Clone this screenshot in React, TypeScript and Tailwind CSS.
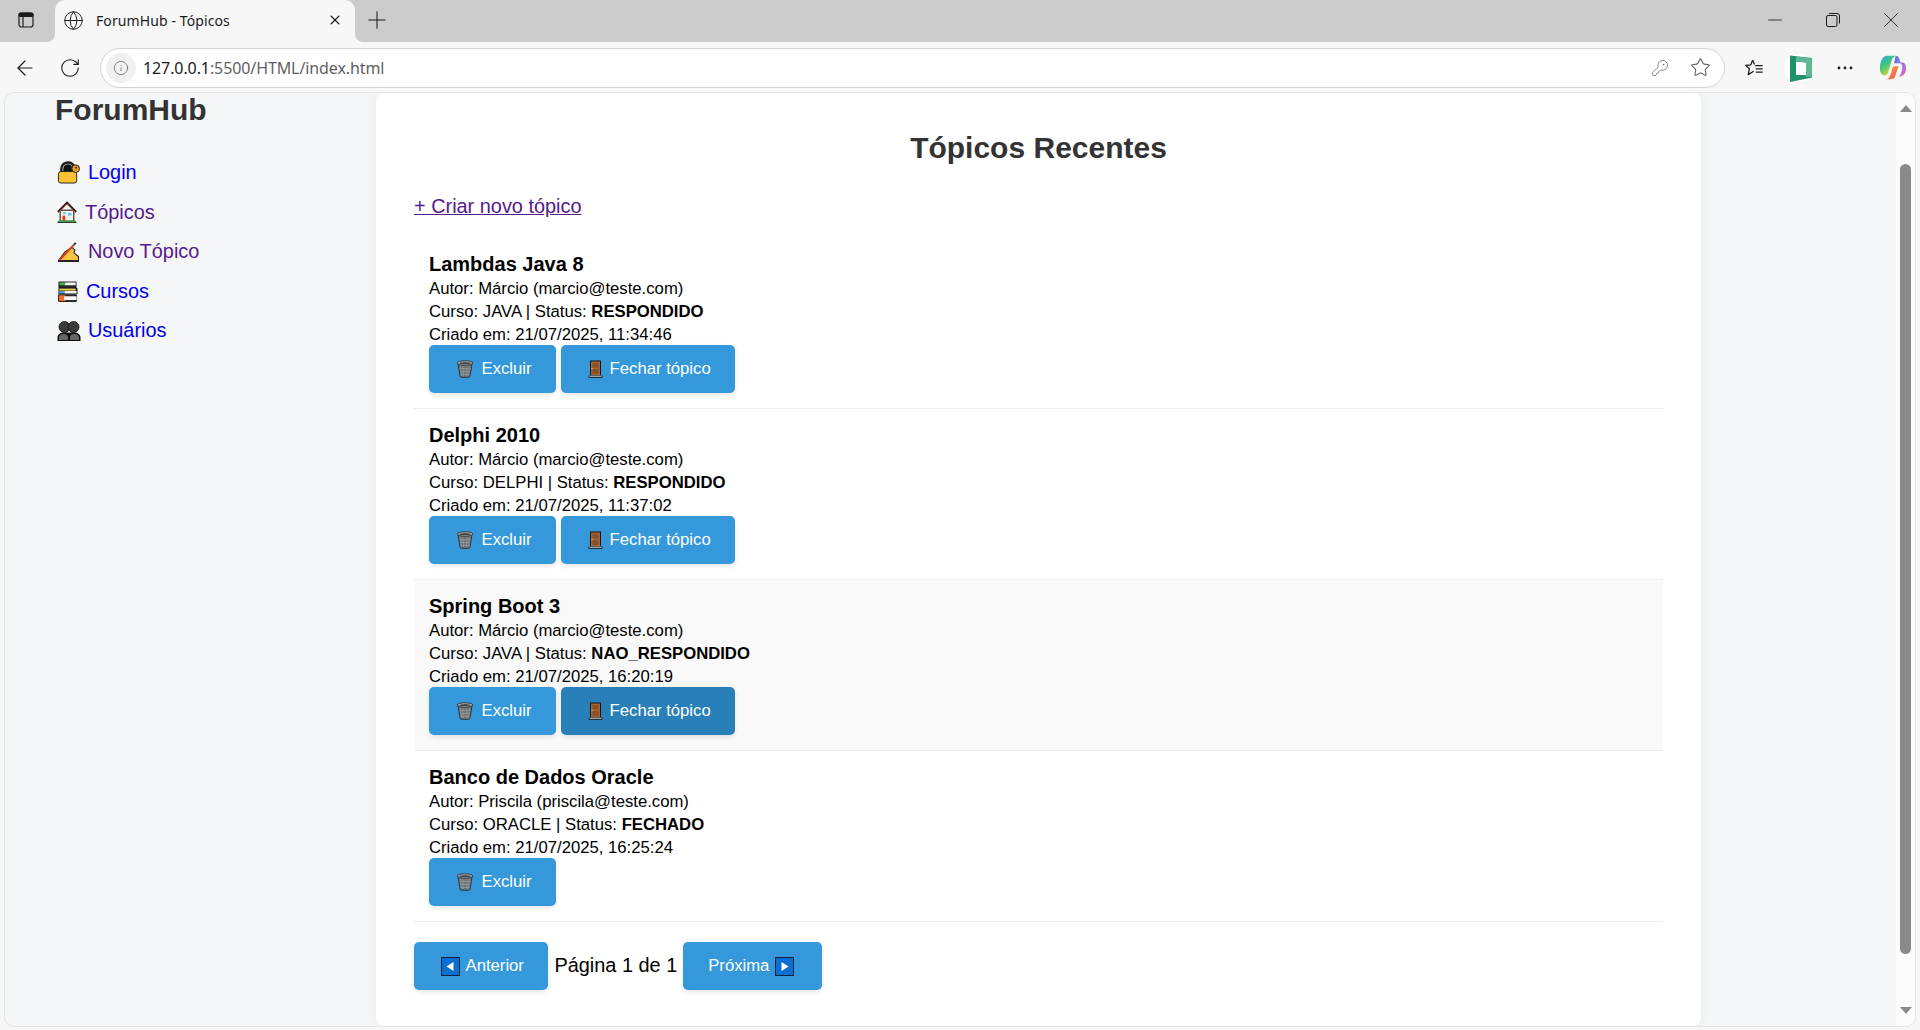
import { ArrowLeft, RotateCw, Info, KeyRound, Star, Plus, X, Minus, Globe } from 'lucide-react'

const topics = [
  { title: 'Lambdas Java 8', author: 'Márcio (marcio@teste.com)', course: 'JAVA', status: 'RESPONDIDO', date: '21/07/2025, 11:34:46', canClose: true, hover: false },
  { title: 'Delphi 2010', author: 'Márcio (marcio@teste.com)', course: 'DELPHI', status: 'RESPONDIDO', date: '21/07/2025, 11:37:02', canClose: true, hover: false },
  { title: 'Spring Boot 3', author: 'Márcio (marcio@teste.com)', course: 'JAVA', status: 'NAO_RESPONDIDO', date: '21/07/2025, 16:20:19', canClose: true, hover: true },
  { title: 'Banco de Dados Oracle', author: 'Priscila (priscila@teste.com)', course: 'ORACLE', status: 'FECHADO', date: '21/07/2025, 16:25:24', canClose: false, hover: false },
]

function LockEmoji() {
  return (
    <svg width="24" height="23" viewBox="0 0 24 24" className="shrink-0">
      <path d="M4 12V8.500a7 7 0 0 1 13-3.500" fill="none" stroke="#222" strokeWidth="2.600" />
      <path d="M6 12V8.500a5 5 0 0 1 9-3V12z" fill="#111" />
      <rect x="1" y="11" width="19" height="12" rx="2.500" fill="#fdc233" stroke="#222" strokeWidth="1" />
      <circle cx="19" cy="8" r="4" fill="#e9a21f" stroke="#222" strokeWidth="1" />
      <circle cx="19.500" cy="7" r="1" fill="#222" />
    </svg>
  )
}

function HouseEmoji() {
  return (
    <svg width="20" height="22" viewBox="0 0 22 24" className="shrink-0">
      <rect x="3.500" y="10" width="15" height="12" fill="#fbf0e8" stroke="#222" strokeWidth="1.200" />
      <path d="M1 12 11 2l10 10" fill="none" stroke="#222" strokeWidth="2.400" />
      <path d="M2 12 11 3l9 9" fill="none" stroke="#e8543a" strokeWidth="0.900" />
      <rect x="6" y="16" width="3" height="6" fill="#e8371e" />
      <rect x="12" y="13" width="4" height="3" fill="#5ccbf0" />
      <rect x="7" y="12" width="2.500" height="2.500" fill="#5ccbf0" />
      <rect x="1" y="21.500" width="20" height="1.500" fill="#35a64a" />
      <rect x="0.500" y="23" width="21" height="1" fill="#222" />
    </svg>
  )
}

function WriteEmoji() {
  return (
    <svg width="23" height="20" viewBox="0 0 24 22" className="shrink-0">
      <path d="M1 20.500 8 11l8-5 3 3-1 3 5 4v4.500z" fill="#f6c445" stroke="#222" strokeWidth="1.200" strokeLinejoin="round" />
      <path d="M2 20 18 3" stroke="#d8401f" strokeWidth="2.200" />
      <path d="M18 3l2-2" stroke="#222" strokeWidth="2" />
      <rect x="0.500" y="20.500" width="23" height="1.500" fill="#222" />
    </svg>
  )
}

function BooksEmoji() {
  return (
    <svg width="21" height="21" viewBox="0 0 21 22" className="shrink-0">
      <rect x="1" y="0.500" width="19" height="7" rx="1" fill="#222" />
      <rect x="2" y="1.500" width="6" height="3" fill="#3bb34a" />
      <rect x="8" y="1.500" width="11" height="3" fill="#f3f3f3" />
      <rect x="1" y="7" width="20" height="7" rx="1" fill="#222" />
      <rect x="2" y="8" width="17" height="2" fill="#f0d24a" />
      <rect x="1.500" y="10.500" width="6" height="2.500" fill="#4f9ad8" />
      <rect x="7.500" y="10.500" width="12.500" height="2.500" fill="#f3f3f3" />
      <rect x="0.500" y="14" width="20" height="8" rx="1.500" fill="#222" />
      <rect x="1.500" y="15" width="7" height="6" rx="1" fill="#f26a21" />
      <rect x="7" y="16" width="13" height="4" fill="#f8f8f8" />
    </svg>
  )
}

function UsersEmoji() {
  return (
    <svg width="24" height="20" viewBox="0 0 24 20" className="shrink-0">
      <circle cx="7.500" cy="6" r="5.500" fill="#3b3b3b" stroke="#111" strokeWidth="0.800" />
      <circle cx="16.500" cy="6" r="5.500" fill="#3b3b3b" stroke="#111" strokeWidth="0.800" />
      <path d="M0.500 20v-3.500c0-3 3-5 6-5h11c3 0 6 2 6 5V20z" fill="#111" />
      <path d="M2 19v-2.500c0-2 2.500-3.500 5-3.500s4 1.500 4 3.500V19z" fill="#666" />
      <path d="M13 19v-2.500c0-2 1.500-3.500 4-3.500s5 1.500 5 3.500V19z" fill="#666" />
    </svg>
  )
}

function TrashEmoji() {
  return (
    <svg width="18" height="18" viewBox="0 0 17 18" className="mr-[1px] ml-[2px] shrink-0">
      <path d="M1.500 3.500 3.500 16a1.500 1.500 0 0 0 1.500 1.300h7a1.500 1.500 0 0 0 1.500-1.300l2-12.500z" fill="#6f7577" stroke="#2a2e30" strokeWidth="0.900" />
      <path d="M4 6l1 10M6.500 6l.5 10M10.500 6l-.5 10M13 6l-1 10M3 8.500h11M3.500 11.500h10M4 14.500h9" stroke="#a0a6a8" strokeWidth="0.500" fill="none" />
      <ellipse cx="8.500" cy="3" rx="7.800" ry="2.200" fill="#b9bfc1" stroke="#2a2e30" strokeWidth="0.900" />
      <ellipse cx="8.500" cy="3.200" rx="5.800" ry="1.100" fill="#444a4c" />
    </svg>
  )
}

function DoorEmoji() {
  return (
    <svg width="15" height="18" viewBox="0 0 15 18" className="ml-[2px] shrink-0">
      <rect x="2" y="0.500" width="11" height="15" fill="#1f1410" />
      <rect x="3" y="1.500" width="9" height="14" fill="#a4643a" />
      <rect x="4.500" y="3" width="6" height="4.500" fill="#875029" />
      <rect x="4.500" y="9" width="6" height="5" fill="#875029" />
      <rect x="3.500" y="8" width="1" height="1" fill="#f3c63f" />
      <rect x="0.500" y="15.500" width="14" height="2.500" fill="#20303a" />
      <rect x="1.500" y="15.800" width="12" height="1" fill="#b9c4c9" />
    </svg>
  )
}

function ArrowBox({ dir }: { dir: 'left' | 'right' }) {
  return (
    <svg width="19" height="19" viewBox="0 0 19 19" className={`shrink-0 ${dir === 'left' ? 'ml-[2px]' : 'mr-[3px]'}`}>
      <rect x="0.500" y="0.500" width="18" height="18" fill="#0a6fd0" stroke="#10233a" />
      <path d={dir === 'left' ? 'M12.500 5v9l-7-4.500z' : 'M6.500 5v9l7-4.500z'} fill="#fff" />
    </svg>
  )
}

function BrandIcon() {
  return (
    <svg width="30" height="28" viewBox="0 0 30 28">
      <circle cx="15" cy="14" r="14" fill="#fff" />
      <path d="M7 1.500 29 4v19.500L7 28z" fill="#1f9268" />
      <path d="M13 7.500 23 8.500v12.500H13z" fill="#fff" />
      <path d="M13 2.500 29 4.500v18l-6 .500V8.500L13 7.500z" fill="#5fb893" />
    </svg>
  )
}

function CopilotIcon() {
  return (
    <svg width="28" height="28" viewBox="0 0 30 30">
      <defs>
        <linearGradient id="cpA" x1="0" y1="0" x2="0.600" y2="1">
          <stop offset="0" stopColor="#2aa5e8" />
          <stop offset="0.500" stopColor="#3fc77a" />
          <stop offset="1" stopColor="#f4d02f" />
        </linearGradient>
        <linearGradient id="cpB" x1="0.300" y1="0" x2="1" y2="1">
          <stop offset="0" stopColor="#5a7df0" />
          <stop offset="0.600" stopColor="#b36be0" />
          <stop offset="1" stopColor="#e86ab0" />
        </linearGradient>
        <linearGradient id="cpC" x1="0" y1="0" x2="1" y2="1">
          <stop offset="0" stopColor="#f8b030" />
          <stop offset="1" stopColor="#ee4f5f" />
        </linearGradient>
      </defs>
      <path d="M9 2h9c-3 1-4 3-5 7l-3 10c-1 3-2 4-4 4-3 0-5-3-5-8 0-7 3-13 8-13z" fill="url(#cpA)" />
      <path d="M18 2c2 0 3 1 4 4l1 3h2c3 0 4 3 4 6 0 6-3 9-7 9h-1c3-2 3-5 4-9 0-3-1-5-3-5h-6l1-4c0-2 1-4 1-4z" fill="url(#cpB)" />
      <path d="M17 13h4l-3 9c-1 3-2 5-5 5H7c2 0 4-1 5-4l1-3c1-5 2-7 4-7z" fill="url(#cpC)" />
    </svg>
  )
}

function FavoritesIcon() {
  return (
    <svg width="20" height="20" viewBox="0 0 22 22" fill="none" stroke="#1b1b1b" strokeWidth="1.400" strokeLinejoin="round">
      <path d="M9.500 2.500 7.300 7.600 1.800 8.100l4.100 3.700-1.200 6.500 5.800-3.800" />
      <path d="M9.500 2.500l2 4.700" />
      <path d="M12.500 8.500h8M13 12h7.500M13 15.500h7.500" />
    </svg>
  )
}

function DotsIcon() {
  return (
    <svg width="16" height="4" viewBox="0 0 16 4" fill="#1b1b1b">
      <circle cx="2" cy="2" r="1.400" />
      <circle cx="8" cy="2" r="1.400" />
      <circle cx="14" cy="2" r="1.400" />
    </svg>
  )
}

function RestoreIcon() {
  return (
    <svg width="14" height="14" viewBox="0 0 14 14" fill="none" stroke="#1b1b1b" strokeWidth="1">
      <rect x="0.500" y="2.500" width="10.500" height="11" rx="1.500" />
      <path d="M3 .500h8a2.500 2.500 0 0 1 2.500 2.500v7.500" />
    </svg>
  )
}

function PanelIcon() {
  return (
    <svg width="16" height="16" viewBox="0 0 16 16" fill="none" stroke="#1b1b1b" strokeWidth="1.200">
      <rect x="1" y="1" width="14" height="14" rx="2.500" />
      <rect x="1" y="1" width="14" height="3.500" rx="1.500" fill="#1b1b1b" />
      <path d="M5 4v11" />
    </svg>
  )
}

function ActionButton({ icon, label, hover }: { icon: React.ReactNode; label: string; hover?: boolean }) {
  return (
    <button className={`flex h-12 items-center justify-center gap-[7px] rounded-[5px] px-[24.500px] text-[16.7px] text-white shadow-[0_2px_5px_rgba(0,0,0,0.1)] ${hover ? 'bg-[#2980b9]' : 'bg-[#3498db]'}`}>
      {icon}
      {label}
    </button>
  )
}

function TopicItem({ topic }: { topic: (typeof topics)[number] }) {
  return (
    <li className={`border-b border-[#eeeeee] p-[15px] ${topic.hover ? 'bg-[#f9f9f9]' : ''}`}>
      <h3 className="-mt-[1px] mb-[1px] text-xl leading-[24px] font-bold text-black">{topic.title}</h3>
      <p className="text-[16.7px] leading-[23px] text-black">Autor: {topic.author}</p>
      <p className="text-[16.7px] leading-[23px] text-black">
        Curso: {topic.course} | Status: <strong>{topic.status}</strong>
      </p>
      <p className="text-[16.7px] leading-[23px] text-black">Criado em: {topic.date}</p>
      <div className="-mt-[1px] flex gap-[5px]">
        <ActionButton icon={<TrashEmoji />} label="Excluir" />
        {topic.canClose && <ActionButton icon={<DoorEmoji />} label="Fechar tópico" hover={topic.hover} />}
      </div>
    </li>
  )
}

export default function App() {
  return (
    <div className="flex h-[1030px] flex-col overflow-hidden bg-[#f7f7f7] font-['Liberation_Sans',Arial,sans-serif]">
      {/* Tabs */}
      <div className="flex h-[42px] shrink-0">
        <div className="flex w-[55px] items-center justify-center rounded-br-lg bg-[#cccccc] pr-[4px] pb-[2px]">
          <PanelIcon />
        </div>
        <div className="w-[300px] bg-[#cccccc]">
          <div className="flex h-[42px] items-center rounded-t-[10px] bg-[#f7f7f7] pr-3 pb-[2px] pl-2">
            <Globe size={21} strokeWidth={1.1} className="text-[#1b1b1b]" />
            <span className="ml-[12px] flex-1 font-['Noto_Sans',sans-serif] text-[14px] tracking-[0.1px] text-[#1b1b1b]">ForumHub - Tópicos</span>
            <X size={16} strokeWidth={1.6} className="text-[#1b1b1b]" />
          </div>
        </div>
        <div className="flex flex-1 items-center rounded-bl-lg bg-[#cccccc] pb-[2px]">
          <div className="flex w-[44px] justify-center">
            <Plus size={28} strokeWidth={0.9} className="text-[#1b1b1b]" />
          </div>
          <div className="flex-1" />
          <div className="flex items-center text-[#1b1b1b]">
            <div className="flex w-[58px] justify-center">
              <Minus size={22} strokeWidth={0.9} />
            </div>
            <div className="flex w-[58px] justify-center">
              <RestoreIcon />
            </div>
            <div className="flex w-[58px] justify-center">
              <X size={26} strokeWidth={0.8} />
            </div>
          </div>
        </div>
      </div>

      {/* Toolbar */}
      <div className="flex h-[50px] shrink-0 items-center px-[13px] pt-[1px]">
        <ArrowLeft size={24} strokeWidth={1.2} className="text-[#1b1b1b]" />
        <RotateCw size={22} strokeWidth={1.2} className="ml-[22px] text-[#1b1b1b]" />
        <div className="ml-[19px] flex h-10 flex-1 items-center rounded-full border border-[#d4d4d4] bg-white pr-[13px] pl-[5px]">
          <span className="flex h-[30px] w-[30px] items-center justify-center rounded-full bg-[#f0f0f0]">
            <Info size={16} strokeWidth={1.1} className="text-[#5f5f5f]" />
          </span>
          <span className="ml-[7px] flex-1 font-['Noto_Sans',sans-serif] text-[16px] tracking-[-0.1px] text-[#1b1b1b]">
            127.0.0.1<span className="text-[#5f5f5f]">:5500/HTML/index.html</span>
          </span>
          <KeyRound size={18} strokeWidth={1} className="text-[#5f5f5f]" />
          <Star size={21} strokeWidth={1.2} className="ml-[21px] text-[#5f5f5f]" />
        </div>
        <div className="ml-[19px]">
          <FavoritesIcon />
        </div>
        <div className="ml-[19px]">
          <BrandIcon />
        </div>
        <div className="ml-[24px]">
          <DotsIcon />
        </div>
        <div className="ml-[26px]">
          <CopilotIcon />
        </div>
      </div>

      {/* Page */}
      <div className="mx-1 mb-[3px] flex min-h-0 flex-1 overflow-hidden rounded-[10px] border border-[#e3e3e3] bg-[#f4f6f8]">
        <aside className="w-[371px] shrink-0 pl-[50px]">
          <h2 className="mt-[2px] text-[30px] leading-[30px] font-bold text-[#333333]">ForumHub</h2>
          <ul className="mt-[35px] ml-[2px] flex flex-col gap-[14.500px] text-[19.9px] leading-[25px]">
            <li className="flex items-center gap-[7px]">
              <LockEmoji />
              <a href="#login" className="text-[#0000ee]">Login</a>
            </li>
            <li className="flex items-center gap-[8px]">
              <HouseEmoji />
              <a href="#topicos" className="text-[#551a8b]">Tópicos</a>
            </li>
            <li className="flex items-center gap-[8px]">
              <WriteEmoji />
              <a href="#novo" className="text-[#551a8b]">Novo Tópico</a>
            </li>
            <li className="flex items-center gap-[8px]">
              <BooksEmoji />
              <a href="#cursos" className="text-[#0000ee]">Cursos</a>
            </li>
            <li className="flex items-center gap-[7px]">
              <UsersEmoji />
              <a href="#usuarios" className="text-[#0000ee]">Usuários</a>
            </li>
          </ul>
        </aside>

        <main className="w-[1325px] shrink-0 rounded-lg bg-white px-[38px] shadow-[0_0_15px_rgba(0,0,0,0.05)]">
          <h1 className="mt-[38px] text-center text-[30px] leading-[33px] font-bold text-[#333333]">Tópicos Recentes</h1>
          <a href="#novo" className="mt-[31px] block text-[19.9px] leading-[22px] text-[#551a8b] underline">+ Criar novo tópico</a>
          <ul className="mt-[21px]">
            {topics.map((topic) => (
              <TopicItem key={topic.title} topic={topic} />
            ))}
          </ul>
          <div className="mt-5 flex items-center gap-[6px]">
            <button className="flex h-12 items-center justify-center gap-[6px] rounded-[5px] bg-[#3498db] px-[24.500px] text-[16.7px] text-white shadow-[0_2px_5px_rgba(0,0,0,0.1)]">
              <ArrowBox dir="left" />
              Anterior
            </button>
            <span className="text-[19.9px] text-black">Página 1 de 1</span>
            <button className="flex h-12 items-center justify-center gap-[6px] rounded-[5px] bg-[#3498db] px-[25px] text-[16.7px] text-white shadow-[0_2px_5px_rgba(0,0,0,0.1)]">
              Próxima
              <ArrowBox dir="right" />
            </button>
          </div>
        </main>

        <div className="flex-1" />

        {/* Scrollbar */}
        <div className="flex w-[19px] shrink-0 flex-col items-center bg-[#fbfbfb]">
          <div className="mt-[12px] h-0 w-0 border-x-[6.500px] border-b-[7px] border-x-transparent border-b-[#8a8a8a]" />
          <div className="mt-[52px] h-[790px] w-[11px] rounded-full bg-[#8a8a8a]" />
          <div className="mt-[53px] h-0 w-0 border-x-[6.500px] border-t-[7px] border-x-transparent border-t-[#8a8a8a]" />
        </div>
      </div>
    </div>
  )
}
